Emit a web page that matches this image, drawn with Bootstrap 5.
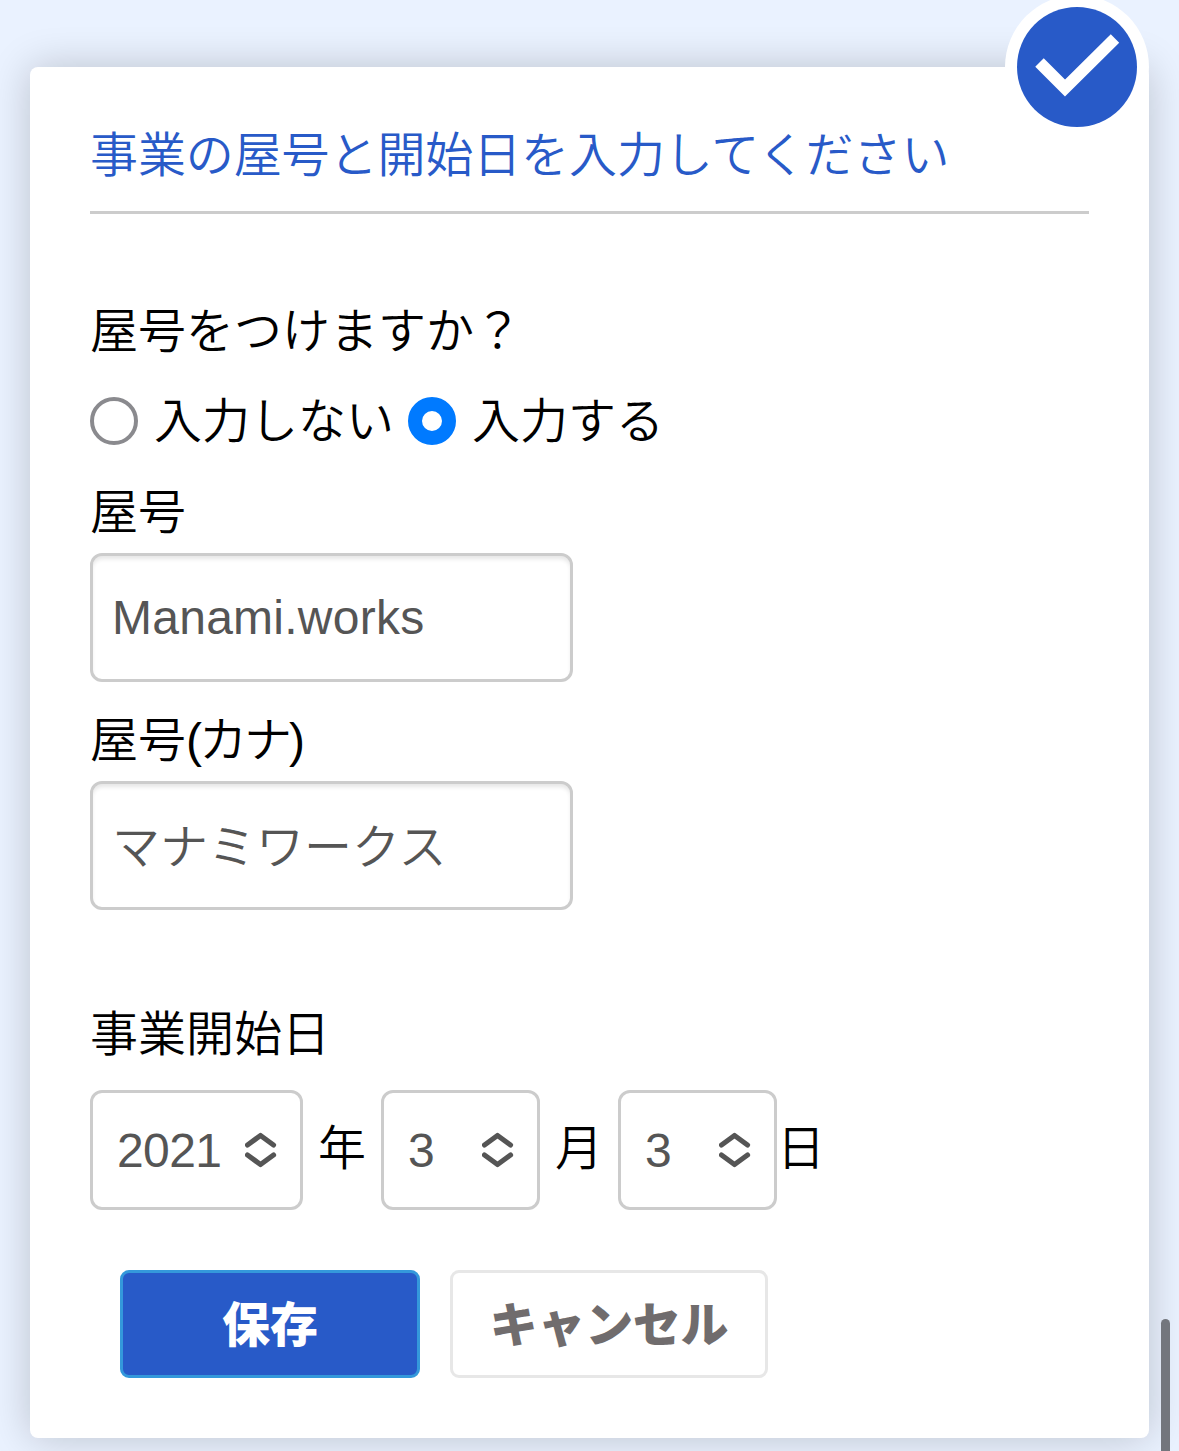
<!DOCTYPE html>
<html lang="ja">
<head>
<meta charset="utf-8">
<meta name="viewport" content="width=device-width, initial-scale=1">
<title>事業の屋号と開始日</title>
<link href="https://cdn.jsdelivr.net/npm/bootstrap@5.3.0/dist/css/bootstrap.min.css" rel="stylesheet">
<style>
body{background:#eaf2ff;color:#000;font-family:"Liberation Sans","Noto Sans CJK JP",sans-serif;font-size:48px;line-height:60px;font-weight:350;padding:67px 30px 0;overflow:hidden;height:1451px}
.panel{border:0;border-radius:8px;box-shadow:0 0 42px rgba(0,0,0,.2);padding:59px 60px 60px;color:#000}
.panel-title{font-size:48px;line-height:60px;font-weight:350;letter-spacing:-.1px;color:#285ac8;padding-bottom:25px;border-bottom:3px solid #ccc;margin:0 0 88px}
.done-badge{top:-72px;right:0;width:144px;height:144px}
.choices{margin:29px 0 32px}
.choices .form-check-input{width:48px;height:48px;margin:0;border:4px solid #8a8a8e;float:none;box-shadow:none}
.choices .form-check-input:checked{background:#fff;border:14px solid #007aff}
.choices .form-check-label{margin-left:16px;padding-top:2px;line-height:58px}
.choices .first{margin-right:14px}
.field{width:483px;height:129px;border:3px solid #ccc;border-radius:12px;padding:0 19px;font-size:48px;font-weight:350;color:#555;box-shadow:inset 0 4px 4px -1px rgba(0,0,0,.1);margin-top:10px}
.field,.field:focus{color:#555}
.field-name{letter-spacing:.25px}
.field-kana{padding-bottom:6px}
.label-kana{margin-top:29px}
.label-kana .tight{letter-spacing:-3px}
.start-label{margin-top:95px}
.start-date{margin-top:25px}
.picker{height:120px;width:159px;border:3px solid #ccc;border-radius:12px;padding:2px 23px 0 24px;color:#555}
.picker.year{width:213px}
.picker.year span{letter-spacing:-.6px}
.picker svg{width:32px;height:36px;margin-top:-2px}
.unit{margin:0 15px;position:relative;top:-1px}
.actions{margin:60px 0 0 30px;gap:30px}
.actions .btn{height:108px;border-width:3px;border-radius:9px;font-size:48px;font-weight:900;line-height:60px;padding:3px 0 0}
.btn-save{width:300px;background:#285ac8;border-color:#3498db;color:#fff}
.btn-stop{width:318px;background:#fff;border-color:#e7e7e7;color:#706c6d;letter-spacing:-.3px}
.thumb{right:9px;top:1319px;width:9px;height:160px;border-radius:5px;background:#73767d}
</style>
<script src="https://cdn.jsdelivr.net/npm/bootstrap@5.3.0/dist/js/bootstrap.bundle.min.js"></script>
</head>
<body>
<main class="card panel position-relative">
  <svg class="done-badge position-absolute" viewBox="0 0 144 144" aria-hidden="true"><circle cx="72" cy="72" r="72" fill="#fff"/><circle cx="72" cy="72" r="60" fill="#285ac8"/><path d="M34.5 67.5 60 93 110 43.500" fill="none" stroke="#fff" stroke-width="12"/></svg>
  <h1 class="panel-title">事業の屋号と開始日を入力してください</h1>
  <div>屋号をつけますか？</div>
  <div class="choices d-flex align-items-center">
    <input class="form-check-input" type="radio" name="trade" id="no"><label class="form-check-label first" for="no">入力しない</label>
    <input class="form-check-input" type="radio" name="trade" id="yes" checked><label class="form-check-label" for="yes">入力する</label>
  </div>
  <label for="name">屋号</label>
  <input class="form-control field field-name" id="name" value="Manami.works">
  <label class="label-kana" for="kana">屋号<span class="tight">(カナ</span>)</label>
  <input class="form-control field field-kana" id="kana" value="マナミワークス">
  <div class="start-label">事業開始日</div>
  <div class="start-date d-flex align-items-center">
    <div class="picker year d-flex align-items-center justify-content-between"><span>2021</span><svg viewBox="0 0 32 36" fill="none" stroke="#555" stroke-width="5.200" stroke-linecap="round" stroke-linejoin="round"><path d="M2.500 13 15.500 3.500 28.500 13M2.500 23 15.500 32.500 28.500 23"/></svg></div>
    <span class="unit">年</span>
    <div class="picker d-flex align-items-center justify-content-between"><span>3</span><svg viewBox="0 0 32 36" fill="none" stroke="#555" stroke-width="5.200" stroke-linecap="round" stroke-linejoin="round"><path d="M2.500 13 15.500 3.500 28.500 13M2.500 23 15.500 32.500 28.500 23"/></svg></div>
    <span class="unit">月</span>
    <div class="picker d-flex align-items-center justify-content-between"><span>3</span><svg viewBox="0 0 32 36" fill="none" stroke="#555" stroke-width="5.200" stroke-linecap="round" stroke-linejoin="round"><path d="M2.500 13 15.500 3.500 28.500 13M2.500 23 15.500 32.500 28.500 23"/></svg></div>
    <span class="unit mx-0">日</span>
  </div>
  <div class="actions d-flex">
    <button class="btn btn-save" type="button">保存</button>
    <button class="btn btn-stop" type="button">キャンセル</button>
  </div>
</main>
<div class="thumb position-absolute"></div>
</body>
</html>
